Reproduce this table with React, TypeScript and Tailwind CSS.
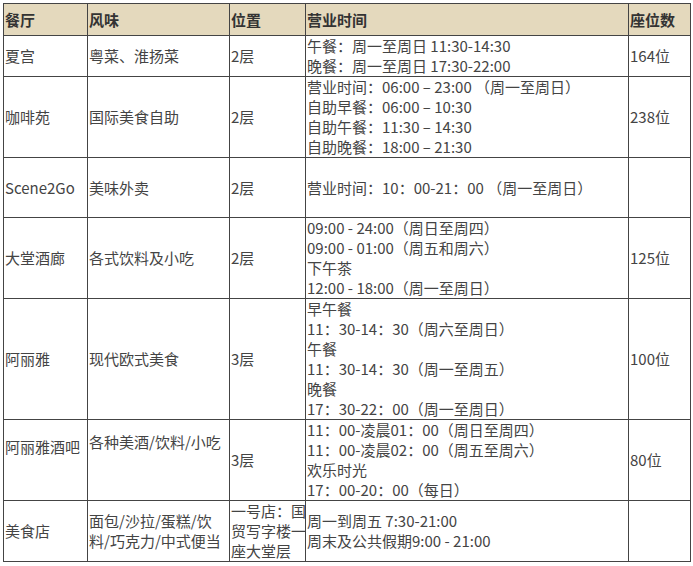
import React from 'react';

type Row = {
  name: React.ReactNode;
  cuisine: React.ReactNode;
  floor: React.ReactNode;
  hours: string[];
  seats: string;
  h?: string;
  namePad?: string;
  cuisinePad?: string;
};

const rows: Row[] = [
  {
    name: '夏宫',
    cuisine: '粤菜、淮扬菜',
    floor: '2层',
    hours: ['午餐：周一至周日 11:30-14:30', '晚餐：周一至周日 17:30-22:00'],
    seats: '164位',
  },
  {
    name: '咖啡苑',
    cuisine: '国际美食自助',
    floor: '2层',
    hours: [
      '营业时间：06:00 – 23:00 （周一至周日）',
      '自助早餐：06:00 – 10:30',
      '自助午餐：11:30 – 14:30',
      '自助晚餐：18:00 – 21:30',
    ],
    seats: '238位',
  },
  {
    name: 'Scene2Go',
    cuisine: '美味外卖',
    floor: '2层',
    hours: ['营业时间：10：00-21：00 （周一至周日）'],
    seats: '',
    h: 'h-[60px]',
  },
  {
    name: '大堂酒廊',
    cuisine: '各式饮料及小吃',
    floor: '2层',
    hours: ['09:00 - 24:00（周日至周四）', '09:00 - 01:00（周五和周六）', '下午茶', '12:00 - 18:00（周一至周日）'],
    seats: '125位',
  },
  {
    name: '阿丽雅',
    cuisine: '现代欧式美食',
    floor: '3层',
    hours: [
      '早午餐',
      '11：30-14：30（周六至周日）',
      '午餐',
      '11：30-14：30（周一至周五）',
      '晚餐',
      '17：30-22：00（周一至周日）',
    ],
    seats: '100位',
  },
  {
    name: '阿丽雅酒吧',
    cuisine: '各种美酒/饮料/小吃',
    floor: '3层',
    hours: ['11：00-凌晨01：00（周日至周四）', '11：00-凌晨02：00（周五至周六）', '欢乐时光', '17：00-20：00（每日）'],
    seats: '80位',
    namePad: 'pb-[26px]',
    cuisinePad: 'pb-[36px]',
  },
  {
    name: '美食店',
    cuisine: (
      <>
        <div className="whitespace-nowrap">面包/沙拉/蛋糕/饮</div>
        <div className="whitespace-nowrap">料/巧克力/中式便当</div>
      </>
    ),
    floor: (
      <>
        <div className="whitespace-nowrap">一号店：国</div>
        <div className="whitespace-nowrap">贸写字楼一</div>
        <div className="whitespace-nowrap">座大堂层</div>
      </>
    ),
    hours: ['周一到周五 7:30-21:00', '周末及公共假期9:00 - 21:00'],
    seats: '',
  },
];

const cell = 'border border-[#444] px-[1px] py-0 align-middle text-left';

export default function App() {
  return (
    <div
      className="min-h-screen bg-white pl-[3px] pt-[3px] text-[15px] leading-[20px] text-[#444]"
      style={{ fontFamily: '"Noto Sans CJK SC", "Noto Sans", sans-serif' }}
    >
      <table className="w-[687px] table-fixed border-collapse">
        <colgroup>
          <col className="w-[84px]" />
          <col className="w-[142px]" />
          <col className="w-[76px]" />
          <col className="w-[323px]" />
          <col className="w-[62px]" />
        </colgroup>
        <thead>
          <tr className="h-[32px] bg-[#e4d9bd] text-[#333]">
            <th className={`${cell} font-bold`}>餐厅</th>
            <th className={`${cell} font-bold`}>风味</th>
            <th className={`${cell} font-bold`}>位置</th>
            <th className={`${cell} font-bold`}>营业时间</th>
            <th className={`${cell} font-bold`}>座位数</th>
          </tr>
        </thead>
        <tbody>
          {rows.map((r, idx) => (
            <tr key={idx} className={r.h ?? ''}>
              <td className={`${cell} ${r.namePad ?? ''}`}>{r.name}</td>
              <td className={`${cell} ${r.cuisinePad ?? ''}`}>{r.cuisine}</td>
              <td className={`${cell} overflow-hidden`}>{r.floor}</td>
              <td className={cell}>
                {r.hours.map((l, i) => (
                  <div key={i} className="whitespace-pre">
                    {l}
                  </div>
                ))}
              </td>
              <td className={cell}>{r.seats}</td>
            </tr>
          ))}
        </tbody>
      </table>
    </div>
  );
}
